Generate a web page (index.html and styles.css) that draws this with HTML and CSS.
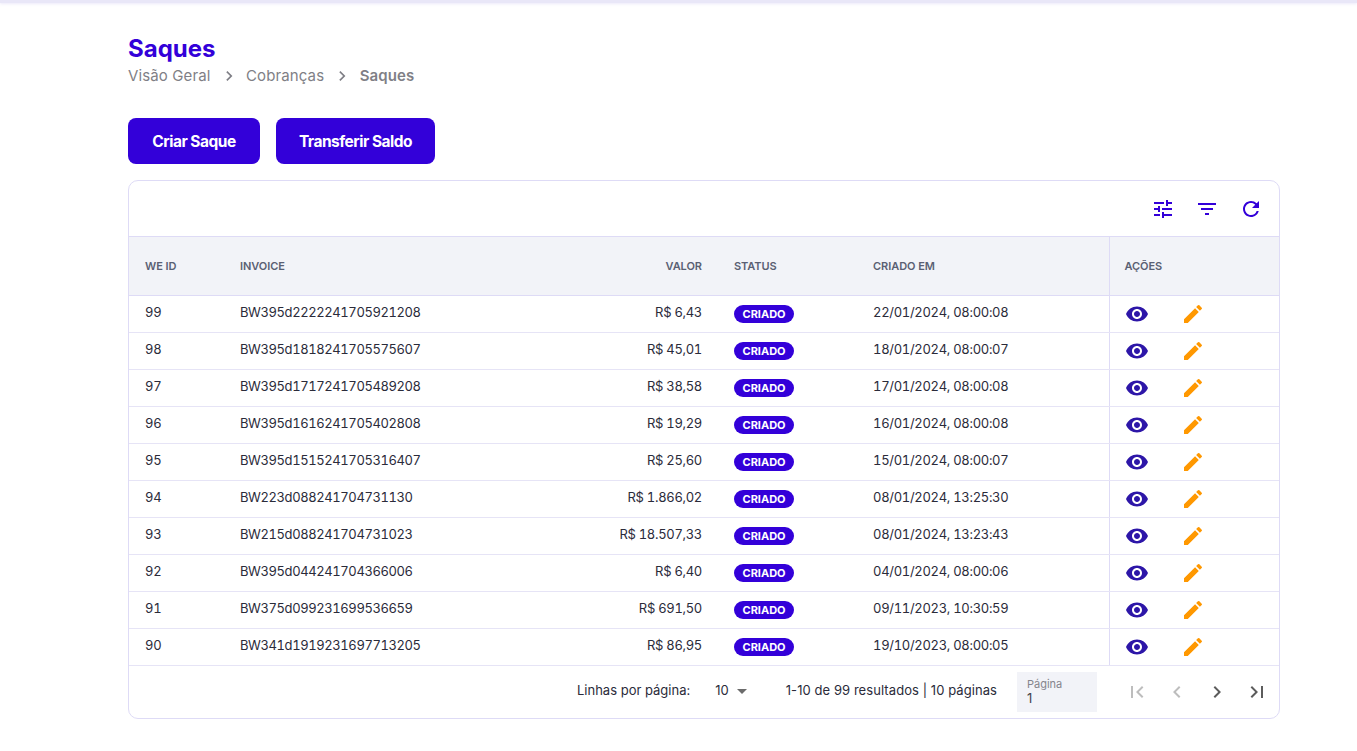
FILE: index.html
```html
<!DOCTYPE html>
<html lang="pt-BR">
<head>
  <meta charset="UTF-8" />
  <title>Saques</title>
  <meta name="viewport" content="width=device-width,initial-scale=1" />
  <link rel="stylesheet" href="styles.css">
</head>
<body>

<div class="topbar"></div>

<main class="page">
  <h1 class="title">Saques</h1>
  <nav class="crumbs">
    <span>Visão Geral</span>
    <svg class="crumb-sep" viewBox="0 0 24 24"><path d="M8.6 6 7.2 7.4 11.8 12l-4.6 4.6L8.6 18l6-6z" transform="translate(1.5 0)"/></svg>
    <span>Cobranças</span>
    <svg class="crumb-sep" viewBox="0 0 24 24"><path d="M8.6 6 7.2 7.4 11.8 12l-4.6 4.6L8.6 18l6-6z" transform="translate(1.5 0)"/></svg>
    <strong>Saques</strong>
  </nav>

  <div class="actions">
    <button class="btn btn-create">Criar Saque</button>
    <button class="btn btn-transfer">Transferir Saldo</button>
  </div>

  <section class="card">
    <div class="tools">
      <svg class="tool" viewBox="0 0 24 24"><path d="M3 17v2h6v-2H3zM3 5v2h10V5H3zm10 16v-2h8v-2h-8v-2h-2v6h2zM7 9v2H3v2h4v2h2V9H7zm14 4v-2H11v2h10zm-6-4h2V7h4V5h-4V3h-2v6z"/></svg>
      <svg class="tool" viewBox="0 0 24 24"><path d="M10 18h4v-2h-4v2zM3 6v2h18V6H3zm3 7h12v-2H6v2z"/></svg>
      <svg class="tool" viewBox="0 0 24 24"><path d="M17.65 6.35A7.958 7.958 0 0 0 12 4c-4.42 0-7.99 3.58-7.99 8s3.57 8 7.99 8c3.73 0 6.84-2.55 7.73-6h-2.08A5.99 5.99 0 0 1 12 18c-3.31 0-6-2.69-6-6s2.69-6 6-6c1.66 0 3.14.69 4.22 1.78L13 11h7V4l-2.35 2.35z"/></svg>
    </div>

    <table class="grid">
      <colgroup>
        <col class="c-id"><col class="c-inv"><col class="c-val"><col class="c-st"><col class="c-date"><col class="c-act">
      </colgroup>
      <thead>
        <tr>
          <th>WE ID</th><th>INVOICE</th><th class="right">VALOR</th><th>STATUS</th><th>CRIADO EM</th><th class="act">AÇÕES</th>
        </tr>
      </thead>
      <tbody id="rows"></tbody>
    </table>

    <div class="pager">
      <span class="per-page">Linhas por página:</span>
      <span class="per-value">10 <i class="caret"></i></span>
      <span class="results">1-10 de 99 resultados | 10 páginas</span>
      <div class="page-box"><small>Página</small><span>1</span></div>
      <div class="nav">
        <svg class="off" viewBox="0 0 24 24"><path d="M18.41 16.59 13.82 12l4.59-4.59L17 6l-6 6 6 6zM6 6h2v12H6z"/></svg>
        <svg class="off" viewBox="0 0 24 24"><path d="M15.41 7.41 14 6l-6 6 6 6 1.41-1.41L10.83 12z"/></svg>
        <svg viewBox="0 0 24 24"><path d="M10 6 8.59 7.41 13.17 12l-4.58 4.59L10 18l6-6z"/></svg>
        <svg viewBox="0 0 24 24"><path d="M5.59 7.41 10.18 12l-4.59 4.59L7 18l6-6-6-6zM16 6h2v12h-2z"/></svg>
      </div>
    </div>
  </section>
</main>

<script>
  const data = [
    [99,'BW395d2222241705921208','R$ 6,43','22/01/2024, 08:00:08'],
    [98,'BW395d1818241705575607','R$ 45,01','18/01/2024, 08:00:07'],
    [97,'BW395d1717241705489208','R$ 38,58','17/01/2024, 08:00:08'],
    [96,'BW395d1616241705402808','R$ 19,29','16/01/2024, 08:00:08'],
    [95,'BW395d1515241705316407','R$ 25,60','15/01/2024, 08:00:07'],
    [94,'BW223d088241704731130','R$ 1.866,02','08/01/2024, 13:25:30'],
    [93,'BW215d088241704731023','R$ 18.507,33','08/01/2024, 13:23:43'],
    [92,'BW395d044241704366006','R$ 6,40','04/01/2024, 08:00:06'],
    [91,'BW375d099231699536659','R$ 691,50','09/11/2023, 10:30:59'],
    [90,'BW341d1919231697713205','R$ 86,95','19/10/2023, 08:00:05']
  ];

  const eye = '<svg class="eye" viewBox="0 0 24 24"><path d="M12 4.5C7 4.5 2.73 7.61 1 12c1.73 4.39 6 7.5 11 7.5s9.27-3.11 11-7.5c-1.73-4.39-6-7.5-11-7.5zM12 17c-2.76 0-5-2.24-5-5s2.24-5 5-5 5 2.24 5 5-2.24 5-5 5zm0-8c-1.66 0-3 1.34-3 3s1.34 3 3 3 3-1.34 3-3-1.34-3-3-3z"/></svg>';
  const pen = '<svg class="pen" viewBox="0 0 24 24"><path d="M3 17.25V21h3.75L17.81 9.94l-3.75-3.75L3 17.25zM20.71 7.04a1 1 0 0 0 0-1.41l-2.34-2.34a1 1 0 0 0-1.41 0l-1.83 1.83 3.75 3.75 1.83-1.83z"/></svg>';

  document.getElementById('rows').innerHTML = data.map(r => `
    <tr>
      <td class="txt">${r[0]}</td>
      <td class="txt inv">${r[1]}</td>
      <td class="txt right">${r[2]}</td>
      <td><span class="badge">CRIADO</span></td>
      <td class="txt">${r[3]}</td>
      <td class="act"><div class="icons">${eye}${pen}</div></td>
    </tr>`).join('');
</script>

</body>
</html>
```

FILE: styles.css
```css
* { box-sizing:border-box; }
body {
  margin:0; background:#fff; color:#2b2b3a;
  font-family:Inter, "Liberation Sans", sans-serif;
}

.topbar {
  height:3px; background:#e9e7f8;
  box-shadow:0 1px 3px rgba(120,110,220,.15);
}

.page { padding:31px 77px 0 128px; }

.title {
  margin:0; font-size:24px; line-height:30px; font-weight:700; color:#3300d9;
}
.crumbs {
  display:flex; align-items:center; height:21px; margin-top:1px;
  font-size:15px; letter-spacing:.12px; color:#7f7f86;
}
.crumbs strong { font-weight:600; }
.crumb-sep { width:20px; height:20px; margin:0 7.5px 0 8px; fill:#7f7f86; }

.actions { display:flex; gap:16px; margin-top:32px; }
.btn {
  height:46px; border:none; border-radius:8px; padding:0;
  background:#3300d9; color:#fff;
  font:700 15.5px Inter, "Liberation Sans", sans-serif;
  letter-spacing:-.5px;
}
.btn-create { width:132px; }
.btn-transfer { width:159px; }

/* CARD */
.card {
  margin-top:16px; border:1px solid #dedbf6; border-radius:10px;
  overflow:hidden; background:#fff;
}
.tools {
  display:flex; justify-content:flex-end; align-items:center; gap:20px;
  height:55px; padding:0 16px 0 0;
}
.tool { width:24px; height:24px; fill:#3300d9; }

/* TABLE */
.grid { width:100%; border-collapse:collapse; table-layout:fixed; font-size:13px; }
.c-id { width:95px; }
.c-inv { width:300px; }
.c-val { width:194px; }
.c-st { width:139px; }
.c-date { width:252px; }

.grid th {
  height:59px; padding:0 16px; text-align:left;
  background:#f2f3f8; color:#5a5f73;
  font-size:11px; font-weight:600; letter-spacing:-.05px;
  border-top:1px solid #dedbf6; border-bottom:1px solid #dedbf6;
}
.grid td {
  height:37px; padding:0 16px; color:#2b2b3a;
  border-bottom:1px solid #e6e4f6;
  white-space:nowrap;
}
.grid td.txt { padding-bottom:4px; font-variant-numeric:tabular-nums; letter-spacing:-.3px; }
.grid td.inv { letter-spacing:-.4px; }
.grid th.right, .grid td.right { text-align:right; }
.grid .act { border-left:1px solid #dedbf6; }
.grid th.act, .grid td.act { padding-left:15px; }

.badge {
  display:inline-block; height:18px; padding:0 8.5px; border-radius:9px;
  background:#3300d9; color:#fff;
  font-size:11px; font-weight:700; line-height:18px;
  vertical-align:middle;
}

.icons { display:flex; align-items:center; gap:32px; }
.eye { width:24px; height:24px; fill:#2d16a8; }
.pen { width:24px; height:24px; fill:#ff9800; }

/* FOOTER */
.pager {
  display:flex; align-items:center; justify-content:flex-end;
  height:52px; padding-right:10px;
  font-size:13px; color:#2b2b3a;
}
.per-page, .per-value, .results { margin-bottom:5px; }
.per-value { margin-left:25px; display:flex; align-items:center; gap:8px; }
.caret {
  width:0; height:0; margin-top:3px;
  border-left:5px solid transparent; border-right:5px solid transparent;
  border-top:5px solid #6b6b6b;
}
.results { margin-left:39px; letter-spacing:.07px; }
.page-box {
  display:flex; flex-direction:column; justify-content:center;
  width:80px; height:40px; margin-left:20px; padding:0 0 3px 10px;
  background:#f2f3f8; line-height:14px; color:#44444c;
}
.page-box small { font-size:11px; color:#85858c; }
.nav { display:flex; gap:16px; margin-left:28px; }
.nav svg { width:24px; height:24px; fill:#5c5c5c; }
.nav svg.off { fill:#bdbdbd; }
```
